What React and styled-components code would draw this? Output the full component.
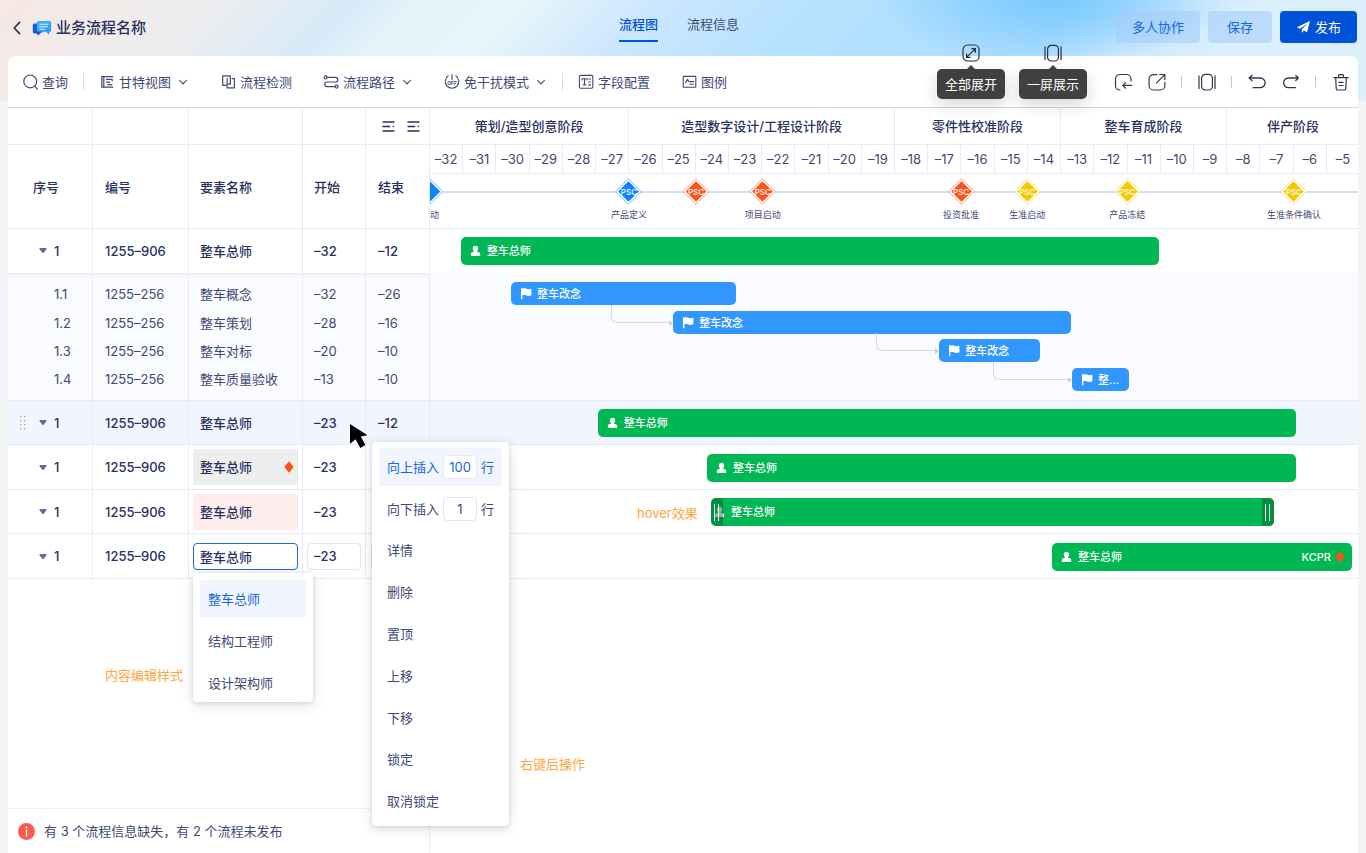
import React from "react";
import styled, { createGlobalStyle, css } from "styled-components";

const color = {
  ink: "#29325f",
  text: "#3f4975",
  blue: "#0052d9",
  line: "#e8eaf7",
  green: "#00b853",
  sky: "#3296ff",
  orange: "#ff5219",
  note: "#ffa63d",
};

const WEEKS = 28;
const FIRST_WEEK = -32;
const pct = (weeks) => `${(weeks / WEEKS) * 100}%`;
const num = (n) => String(n).replace("-", "–");

const GlobalStyle = createGlobalStyle`
  *, *::before, *::after { box-sizing: border-box; }
  body {
    margin: 0;
    background: #f2f4f6;
    color: ${color.text};
    font: 13px/20px Inter, "Noto Sans CJK SC", sans-serif;
  }
  button, input { font: inherit; color: inherit; }
  button { margin: 0; padding: 0; border: 0; background: none; cursor: pointer; }
  svg { display: block; flex: none; }
`;

const Page = styled.div`
  display: flex;
  flex-direction: column;
  min-height: 100vh;
  overflow: hidden;
  background:
    radial-gradient(ellipse 180px 64px at 77% 0, #78caff 0%, rgba(120, 202, 255, 0) 100%) 0 0 / 100% 101px no-repeat,
    linear-gradient(135deg, #f7e8e3 0%, #f1ebe9 8%, #eaedf0 16%, #d7eaf8 24%, #e4f4fa 29%, #e6f5fa 36%,
      #cce7fe 45%, #b8e2ff 55%, #b0dfff 66%, #addcff 74%, #cbe8fe 80%, #dbf0fd 87%, #dceffb 100%)
      0 0 / 100% 101px no-repeat,
    #f2f4f6;
`;

const Header = styled.header`
  display: grid;
  grid-template-columns: 1fr auto 1fr;
  height: 56px;
  padding: 0 9px 0 11px;
`;
const Brand = styled.div`
  display: flex;
  align-items: center;
  gap: 4px;
  color: ${color.ink};
  h1 { margin: 0; font-size: 15px; line-height: 24px; font-weight: 500; }
`;
const BackButton = styled.button`
  margin-right: 5px;
`;
const Tabs = styled.nav`
  display: flex;
  gap: 29px;
  margin-right: 10px;
  padding-top: 14px;
`;
const Tab = styled.a`
  height: 28px;
  color: ${(p) => (p.$active ? color.blue : color.text)};
  font-weight: ${(p) => (p.$active ? 500 : 400)};
  border-bottom: 2px solid ${(p) => (p.$active ? color.blue : "transparent")};
  text-decoration: none;
`;
const HeaderActions = styled.div`
  display: flex;
  justify-content: flex-end;
  gap: 8px;
  padding-top: 11px;
`;
const ActionButton = styled.button`
  display: flex;
  align-items: center;
  justify-content: center;
  gap: 4px;
  height: 32px;
  min-width: 64px;
  padding: 0 16px;
  border-radius: 4px;
  color: ${(p) => (p.$primary ? "#fff" : "#1565e6")};
  background: ${(p) => (p.$primary ? color.blue : "rgba(164, 202, 250, 0.55)")};
`;

const Card = styled.main`
  flex: 1;
  display: flex;
  flex-direction: column;
  margin: 0 8px;
  background: #fff;
  border-radius: 8px 8px 0 0;
`;

const Toolbar = styled.div`
  position: relative;
  display: flex;
  align-items: center;
  justify-content: space-between;
  height: 52px;
  padding: 0 7px 0 14px;
  border-bottom: 1px solid #d5d8e4;
`;
const ToolGroup = styled.div`
  display: flex;
  align-items: center;
  gap: ${(p) => p.$gap || 0}px;
`;
const ToolButton = styled.button`
  display: flex;
  align-items: center;
  gap: 4px;
`;
const ToolDivider = styled.span`
  width: 1px;
  height: 17px;
  margin: 0 15px;
  background: #d9dbe6;
`;
const IconDivider = styled.span`
  width: 2px;
  height: 12px;
  border-left: 1px solid #c3c6d0;
`;
const IconButton = styled.button`
  width: 20px;
  height: 20px;
  color: #33384d;
`;
const Hints = styled.div`
  position: absolute;
  z-index: 3;
  top: -13px;
  right: 271px;
  display: flex;
  gap: 14px;
`;
const Hint = styled.div`
  display: flex;
  flex-direction: column;
  align-items: center;
  gap: 6px;
  color: #2b2f3a;
`;
const HintBubble = styled.div`
  position: relative;
  padding: 5px 8px;
  border-radius: 5px;
  color: #fff;
  background: #404040;
  box-shadow: 0 6px 16px rgba(0, 0, 0, 0.16);
  &::before {
    content: "";
    position: absolute;
    top: -4px;
    left: 50%;
    margin-left: -5px;
    border: 5px solid transparent;
    border-top: 0;
    border-bottom-color: #404040;
  }
`;

const Workspace = styled.div`
  position: relative;
  flex: 1;
  display: flex;
`;
const ListPanel = styled.section`
  flex: none;
  display: flex;
  flex-direction: column;
  width: 422px;
  border-right: 1px solid ${color.line};
`;
const Table = styled.table`
  width: 422px;
  table-layout: fixed;
  border-collapse: separate;
  border-spacing: 0;
`;
const cell = css`
  padding: 0 0 0 12px;
  text-align: left;
  border-right: 1px solid ${color.line};
  &:nth-child(3), &:nth-child(4) { padding-left: 11px; }
`;
const Th = styled.th`
  ${cell}
  height: ${(p) => p.$height}px;
  padding-left: ${(p) => p.$pad || 12}px;
  font-weight: 500;
  color: ${color.ink};
  border-bottom: 1px solid ${color.line};
`;
const Td = styled.td`
  ${cell}
`;
const ListTools = styled.div`
  display: flex;
  gap: 12px;
  padding-left: 4px;
`;
const MainBody = styled.tbody`
  ${Td} {
    height: 44px;
    font-weight: 500;
    color: ${color.ink};
    border-bottom: 1px solid ${color.line};
  }
  tr:nth-child(even) ${Td} { height: 45px; }
  tr.active ${Td} { background: #f1f5fe; }
`;
const OpenBody = styled(MainBody)`
  ${Td} { border-bottom-color: #fff; }
`;
const SubBody = styled.tbody`
  ${Td} { height: 28px; background: #fafbfe; }
  tr:nth-child(even) ${Td} { height: 29px; }
  tr:first-child ${Td} {
    height: 35px;
    padding-top: 7px;
    background: linear-gradient(#eaedf3, #fafbfe 5px);
  }
  tr:last-child ${Td} {
    height: 36px;
    padding-bottom: 7px;
    border-bottom: 1px solid ${color.line};
  }
`;
const Index = styled.div`
  display: flex;
  align-items: center;
  padding-left: ${(p) => (p.$sub ? 34 : 0)}px;
`;
const Grip = styled.span`
  display: flex;
  width: 19px;
  visibility: ${(p) => (p.$shown ? "visible" : "hidden")};
`;
const Toggle = styled.button`
  width: 15px;
`;
const FilledCell = styled.div`
  display: flex;
  align-items: center;
  justify-content: space-between;
  height: 36px;
  margin: 0 4px 0 -7px;
  padding: 0 4px 0 7px;
  border-radius: 2px;
  background: ${(p) => p.$fill};
`;
const EditCell = styled.div`
  position: relative;
  margin: 0 4px 0 -7px;
`;
const CellInput = styled.input`
  display: block;
  width: 100%;
  height: 27px;
  padding: 0 6px;
  font-weight: 500;
  color: ${color.ink};
  background: #fff;
  border: 1px solid ${(p) => (p.$focused ? "#1f66e5" : "#e3e6f3")};
  border-radius: 4px;
  outline: 0;
`;
const popup = css`
  position: absolute;
  z-index: 2;
  background: #fff;
  border-radius: 4px;
  box-shadow: 0 3px 14px rgba(38, 47, 92, 0.14), 0 1px 4px rgba(38, 47, 92, 0.14);
`;
const Options = styled.ul`
  ${popup}
  top: 30px;
  left: 0;
  display: flex;
  flex-direction: column;
  gap: 4px;
  width: 120px;
  margin: 0;
  padding: 7px 7px 0;
  list-style: none;
  font-weight: 400;
`;
const Option = styled.button`
  display: block;
  width: 100%;
  height: 38px;
  padding-left: 8px;
  text-align: left;
  border-radius: 3px;
  color: ${(p) => (p.$active ? "#1565e6" : color.text)};
  background: ${(p) => (p.$active ? "#f1f5fe" : "transparent")};
`;
const ListFooter = styled.footer`
  display: flex;
  align-items: center;
  gap: 9px;
  height: 45px;
  margin-top: auto;
  padding-left: 10px;
  border-top: 1px solid #f0f1fa;
`;
const InfoDot = styled.span`
  display: grid;
  place-items: center;
  width: 17px;
  height: 17px;
  border-radius: 50%;
  color: #fff;
  background: #fa5a50;
`;

const Timeline = styled.section`
  flex: 1;
  min-width: 0;
  overflow: hidden;
`;
const Scale = styled.div`
  width: calc(100% + 2px);
`;
const Phases = styled.div`
  display: grid;
  grid-template-columns: 6fr 8fr 5fr 5fr 4fr;
  height: 37px;
  border-bottom: 1px solid ${color.line};
`;
const Phase = styled.div`
  display: grid;
  place-items: center;
  min-width: 0;
  font-weight: 500;
  color: ${color.ink};
  white-space: nowrap;
  border-right: 1px solid ${color.line};
`;
const Weeks = styled.div`
  display: grid;
  grid-template-columns: repeat(${WEEKS}, 1fr);
  height: 29px;
  border-bottom: 1px solid ${color.line};
`;
const Week = styled.div`
  display: grid;
  place-items: center;
  min-width: 0;
  border-right: 1px solid ${color.line};
`;
const Milestones = styled.div`
  position: relative;
  height: 55px;
  border-bottom: 1px solid ${color.line};
  &::before {
    content: "";
    position: absolute;
    top: 17px;
    left: 0;
    right: 0;
    height: 2px;
    background: #d3def8;
  }
`;
const Milestone = styled.div`
  position: absolute;
  top: 4px;
  display: flex;
  flex-direction: column;
  align-items: center;
  gap: 3px;
  transform: translateX(-50%);
  font-size: 9px;
  line-height: 14px;
  white-space: nowrap;
`;
const Gate = styled.div`
  display: grid;
  place-items: center;
  svg, span { grid-area: 1 / 1; }
  span {
    font-size: 8px;
    font-weight: 500;
    line-height: 8px;
    color: #fff;
  }
`;

const lane = css`
  position: relative;
  width: calc(100% + 2px);
`;
const Lane = styled.div`
  ${lane}
  height: 44px;
  padding-top: 8px;
  border-bottom: 1px solid ${(p) => (p.$open ? "#fff" : color.line)};
  background: ${(p) => (p.$active ? "#f1f5fe" : "#fff")};
`;
const Lanes = styled.div`
  ${Lane}:nth-child(even) { height: 45px; padding-top: 9px; }
`;
const SubLane = styled.div`
  ${lane}
  height: 28px;
  padding-top: 2px;
`;
const SubLanes = styled.div`
  height: 128px;
  padding-top: 7px;
  background: #fafbfe;
  border-bottom: 1px solid ${color.line};
  ${SubLane}:nth-child(even) { height: 29px; padding-top: 3px; }
`;
const Bar = styled.div`
  position: relative;
  display: flex;
  align-items: center;
  gap: ${(p) => (p.$sub ? 5 : 6)}px;
  height: ${(p) => (p.$sub ? 23 : 28)}px;
  padding: 0 7px 0 ${(p) => (p.$hover ? 3 : 9)}px;
  overflow: hidden;
  border-radius: 5px;
  font-size: 11px;
  line-height: 16px;
  font-weight: 500;
  color: #fff;
  background: ${(p) => (p.$sub ? color.sky : color.green)};
`;
const BarName = styled.span`
  overflow: hidden;
  text-overflow: ellipsis;
  white-space: nowrap;
`;
const BarTag = styled.span`
  display: flex;
  align-items: center;
  gap: 4px;
  margin-left: auto;
`;
const ResizeHandle = styled.span`
  position: absolute;
  top: 0;
  bottom: 0;
  ${(p) => p.$side}: 0;
  display: flex;
  align-items: center;
  justify-content: center;
  gap: 3px;
  width: 12px;
  background: rgba(10, 90, 45, 0.45);
  &::before, &::after {
    content: "";
    width: 1px;
    height: 17px;
    background: #d6f3e2;
  }
`;
const Link = styled.span`
  position: absolute;
  top: 25px;
  height: 18px;
  border: solid #d8dade;
  border-width: 0 0 1px 1px;
  border-bottom-left-radius: 6px;
  &::after {
    content: "";
    position: absolute;
    right: -1px;
    bottom: -4px;
    border: 3px solid transparent;
    border-left: 4px solid #cdd0d6;
    border-right: 0;
  }
`;

const ContextMenu = styled.div`
  ${popup}
  top: 334px;
  left: 364px;
  display: grid;
  grid-auto-rows: 1fr;
  gap: 4px;
  width: 137px;
  height: 384px;
  padding: 6px 7px;
`;
const MenuRow = styled.div`
  display: flex;
  align-items: center;
  gap: 4px;
  min-height: 0;
  padding-left: 8px;
  white-space: nowrap;
  border-radius: 3px;
  color: ${(p) => (p.$active ? "#1565e6" : color.text)};
  background: ${(p) => (p.$active ? "#f1f5fe" : "transparent")};
`;
const MenuItem = styled(MenuRow).attrs({ as: "button" })``;
const CountInput = styled.input`
  flex: none;
  width: 34px;
  height: 24px;
  margin: 0;
  padding: 0;
  text-align: center;
  background: #fff;
  border: 1px solid #e5e8f4;
  border-radius: 4px;
  outline: 0;
`;
const Note = styled.span`
  position: absolute;
  z-index: 1;
  top: ${(p) => p.$top}px;
  left: ${(p) => p.$left}px;
  color: ${color.note};
  white-space: nowrap;
`;
const Pointer = styled.svg`
  position: absolute;
  z-index: 3;
  top: 315px;
  left: 341px;
`;
const ChevronBox = styled.svg`
  margin-left: 2px;
`;

/* ---------- icons ---------- */

const Line = ({ size = 16, width = 1.1, children }) => (
  <svg width={size} height={size} viewBox={`0 0 ${size} ${size}`} fill="none" stroke="currentColor"
    strokeWidth={width} strokeLinecap="round" strokeLinejoin="round" aria-hidden="true">
    {children}
  </svg>
);
const SearchIcon = () => (
  <Line width={1.2}><circle cx="8.2" cy="7.4" r="6.4" /><path d="M12.9 12.4l2.6 2.7" /></Line>
);
const GanttIcon = () => (
  <Line width={1.2}><path d="M13.8 2.6H2.8v10.6h11M4.8 2.6v10.6M7.6 5.4h5.6v1.4M7.6 8.2h3.2M8.8 10.6h4.2" /></Line>
);
const DetectIcon = () => (
  <Line width={1.2}><path d="M5.6 11.4H2.7V1.9h7.6v8.3H8M7.2 8.1V4.4M12 4.6h2.4v9.3H7V8.2" /></Line>
);
const RouteIcon = () => (
  <Line width={1.2}>
    <circle cx="2.6" cy="3.4" r="1.5" /><circle cx="13.6" cy="12.6" r="1.5" />
    <path d="M4.2 3.4h8.2a2.3 2.3 0 0 1 0 4.6H4a2.3 2.3 0 0 0 0 4.6h8" />
  </Line>
);
const QuietIcon = () => (
  <Line>
    <path d="M4.2 1.8a6.8 6.8 0 1 0 7.6 0M8 .6v5" />
    <text x="8" y="10.6" fontSize="5" fontWeight="700" textAnchor="middle" fill="currentColor" stroke="none">OFF</text>
  </Line>
);
const FieldIcon = () => (
  <Line>
    <rect x="1.4" y="1.4" width="13.4" height="12.8" rx="1.2" />
    <path d="M4 6V4.7h5V6M6.5 4.7v6.2M5.3 10.9h2.4M10.7 5h1.8M10.7 8h1.8M10.7 10.9h1.8" />
  </Line>
);
const LegendIcon = () => (
  <Line>
    <rect x="2.2" y="2.4" width="12.6" height="10.8" rx="0.4" />
    <path d="M4.6 8.6l1.9-3.2L8.2 7.6h4.4M8.8 10.2h3.8" />
  </Line>
);
const Chevron = () => (
  <ChevronBox width="12" height="16" viewBox="0 0 12 16" fill="none" stroke="currentColor" strokeWidth="1.1"
    strokeLinecap="round" strokeLinejoin="round" aria-hidden="true">
    <path d="M2.6 6.4L6 9.8l3.4-3.4" />
  </ChevronBox>
);
const ImportIcon = () => (
  <Line size={20} width={1.2}>
    <path d="M7 18h-.3A4.2 4.2 0 0 1 2.5 13.8V7A4.5 4.5 0 0 1 7 2.5h6.5A4.5 4.5 0 0 1 18 7v2" />
    <path d="M18.7 13.4H9.8M12.6 10.6l-2.9 2.8 2.9 2.8" />
  </Line>
);
const ExportIcon = () => (
  <Line size={20} width={1.2}>
    <path d="M10 2.6H6.6A4.5 4.5 0 0 0 2.1 7.1v6.4A4.5 4.5 0 0 0 6.6 18h6.8a4.5 4.5 0 0 0 4.5-4.5V10.3" />
    <path d="M9.6 10.8l8.2-8.2M12.7 2.5h5.2v5.2" />
  </Line>
);
const FitIcon = () => (
  <Line size={20} width={1.2}>
    <rect x="4.6" y="2.4" width="10.8" height="15.6" rx="3.8" />
    <path d="M2 3.8v12.8M18 3.8v12.8" />
  </Line>
);
const UndoIcon = () => (
  <Line size={20} width={1.3}><path d="M2.3 6h11a4.85 4.85 0 0 1 0 9.7H6M5 3.2L2.2 6 5 8.8" /></Line>
);
const RedoIcon = () => (
  <Line size={20} width={1.3}><path d="M17.3 6H7.4a4.85 4.85 0 0 0 0 9.7h7M14.8 3.5L17.4 6l-2.6 2.5" /></Line>
);
const TrashIcon = () => (
  <Line size={20} width={1.2}>
    <path d="M2.8 5.7h14.4M7.4 5.7l.5-3h4.2l.5 3M4.7 5.7l.5 10.7a1.6 1.6 0 0 0 1.6 1.6h6.4a1.6 1.6 0 0 0 1.6-1.6l.5-10.7M7.9 10.3h4.3M7.9 13.5h4.3" />
  </Line>
);
const ExpandIcon = () => (
  <Line size={20} width={1.2}>
    <rect x="2" y="2" width="16" height="16" rx="4.6" />
    <path d="M5.8 14.2l8.4-8.4M10.8 5.6h3.6v3.6M5.6 10.8v3.6h3.6" />
  </Line>
);
const ListIcon = () => (
  <Line size={13} width={1.4}><path d="M1 2h11M1 6.5h6.6M11.2 6.5h.3M1 11h11" /></Line>
);
const BrandIcon = () => (
  <svg width="20" height="18" viewBox="0 0 20 18" aria-hidden="true">
    <defs>
      <linearGradient id="bubble" x1="0" y1="0" x2="0.3" y2="1">
        <stop offset="0" stopColor="#45b4f6" /><stop offset="1" stopColor="#2b9bee" />
      </linearGradient>
    </defs>
    <path d="M2.5 4.5h8v9H9l-2.6 3.1-1.9-2.2H2.500a1.700 1.700 0 0 1-1.700-1.700v-6.500a1.700 1.700 0 0 1 1.700-1.700z" fill="#1658de" />
    <path d="M6.4 2h11.200a1.600 1.600 0 0 1 1.600 1.600v7.600a1.600 1.600 0 0 1-1.600 1.600h-.4v3l-3.200-3H6.400a1.600 1.600 0 0 1-1.600-1.600V3.600A1.600 1.600 0 0 1 6.400 2z" fill="url(#bubble)" />
    <path d="M8 5.3h8M7.500 7.800h8M8 10.300h4.500" stroke="#d9f1ff" strokeWidth="1.1" strokeLinecap="round" />
  </svg>
);
const BackIcon = () => (
  <svg width="12" height="16" viewBox="0 0 12 16" fill="none" stroke={color.ink} strokeWidth="1.7" strokeLinecap="round" strokeLinejoin="round" aria-hidden="true">
    <path d="M8.6 2.4L3.200 8l5.400 5.600" />
  </svg>
);
const SendIcon = () => (
  <svg width="15" height="14" viewBox="0 0 15 14" fill="#fff" aria-hidden="true">
    <path d="M14 1L.8 7.200l3.400 1.600L11.400 3.600 5.800 9.500v3.400l2-2.300 3.300 1.600z" />
  </svg>
);
const PersonIcon = () => (
  <svg width="11" height="12" viewBox="0 0 11 12" fill="#fff" aria-hidden="true">
    <path d="M5.500.8a2.700 2.700 0 0 1 2.700 2.800c0 1.100-.5 2.100-1.200 2.600v.5l2 .6c.8.300 1.200.9 1.200 1.700v1.400c0 .4-.3.700-.7.700H1.500c-.4 0-.7-.3-.7-.7V9c0-.8.4-1.400 1.200-1.700l2-.6v-.5c-.7-.5-1.200-1.500-1.200-2.600A2.700 2.700 0 0 1 5.500.8z" />
  </svg>
);
const FlagIcon = () => (
  <svg width="12" height="13" viewBox="0 0 12 13" fill="#fff" aria-hidden="true">
    <path d="M1 1.200h1.200v.4c1.300-.6 2.600-.5 3.800 0 1.400.6 2.600.7 4 .3.700-.2 1.400 0 1.400.6v5.400c0 .4-.2.600-.6.700-1.500.5-3.200.4-4.700-.1-1.300-.5-2.600-.6-3.700-.2v3.900H1z" />
  </svg>
);
const Gem = () => (
  <svg width="10" height="12" viewBox="0 0 10 12" fill={color.orange} aria-hidden="true"><path d="M5 .2l4.700 5.800L5 11.800.3 6z" /></svg>
);
const CaretIcon = () => (
  <svg width="8" height="7" viewBox="0 0 8 7" fill="#5f6b9c" aria-hidden="true">
    <path d="M1.200 1h5.600c.7 0 1 .7.600 1.200L4.700 5.700a.9.9 0 0 1-1.400 0L.6 2.200C.2 1.700.5 1 1.200 1z" />
  </svg>
);
const GripIcon = () => (
  <svg width="7" height="14" viewBox="0 0 7 14" fill="#9ba2bd" aria-hidden="true">
    {[1, 5, 9, 13].map((y) => [0, 4].map((x) => <rect key={`${x}-${y}`} x={x} y={y - 1} width="1.3" height="1.3" />))}
  </svg>
);

/* ---------- data ---------- */

const subTasks = [
  { no: "1.1", code: "1255–256", name: "整车概念", start: -32, end: -26, bar: [2.44, 6.78], label: "整车改念", link: [5.45, 1.85] },
  { no: "1.2", code: "1255–256", name: "整车策划", start: -28, end: -16, bar: [7.32, 11.98], label: "整车改念", link: [13.44, 1.85] },
  { no: "1.3", code: "1255–256", name: "整车对标", start: -20, end: -10, bar: [15.33, 3.03], label: "整车改念", link: [16.94, 2.35] },
  { no: "1.4", code: "1255–256", name: "整车质量验收", start: -13, end: -10, bar: [19.33, 1.72], label: "整车改念" },
];
const tasks = [
  { id: "a", start: -23, end: -12, active: true, bar: [5.05, 21.02] },
  { id: "b", start: -23, end: -12, state: "marked", bar: [8.34, 17.73] },
  { id: "c", start: -23, end: -12, state: "error", bar: [8.46, 16.95], hover: true },
  { id: "d", start: -23, end: -12, state: "editing", bar: [18.73, 9.03], tag: "KCPR" },
];
const phases = ["策划/造型创意阶段", "造型数字设计/工程设计阶段", "零件性校准阶段", "整车育成阶段", "伴产阶段"];
const milestones = [
  { at: 0, tone: "#0a84ff", label: "启动" },
  { at: 5.99, tone: "#0a84ff", label: "产品定义", gate: "PSC" },
  { at: 8.01, tone: color.orange, gate: "PSC" },
  { at: 10.02, tone: color.orange, label: "项目启动", gate: "PSC" },
  { at: 15.99, tone: color.orange, label: "投资批准", gate: "PSC" },
  { at: 17.98, tone: "#f5c800", label: "生准启动", gate: "PSC" },
  { at: 20.99, tone: "#f5c800", label: "产品冻结", gate: "PSC" },
  { at: 26.01, tone: "#f5c800", label: "生准条件确认", gate: "PSC" },
];
const menuItems = ["详情", "删除", "置顶", "上移", "下移", "锁定", "取消锁定"];

/* ---------- parts ---------- */

function NameCell({ state }) {
  const name = "整车总师";
  if (state === "marked") return <FilledCell $fill="#eeeeee">{name}<Gem /></FilledCell>;
  if (state === "error") return <FilledCell $fill="#ffecec">{name}</FilledCell>;
  if (state === "editing")
    return (
      <EditCell>
        <CellInput $focused aria-label="要素名称" defaultValue={name} />
        <Options>
          <li><Option $active>整车总师</Option></li>
          <li><Option>结构工程师</Option></li>
          <li><Option>设计架构师</Option></li>
        </Options>
      </EditCell>
    );
  return name;
}

function NumberCell({ value, editing, label }) {
  if (!editing) return num(value);
  return <EditCell><CellInput aria-label={label} defaultValue={num(value)} /></EditCell>;
}

function MainRow({ task }) {
  const editing = task.state === "editing";
  return (
    <tr className={task.active ? "active" : undefined}>
      <Td>
        <Index>
          <Grip $shown={task.active}><GripIcon /></Grip>
          <Toggle aria-label="折叠"><CaretIcon /></Toggle>1
        </Index>
      </Td>
      <Td>1255–906</Td>
      <Td><NameCell state={task.state} /></Td>
      <Td><NumberCell value={task.start} editing={editing} label="开始" /></Td>
      <Td><NumberCell value={task.end} editing={editing} label="结束" /></Td>
    </tr>
  );
}

function MainBar({ task }) {
  const [from, span] = task.bar;
  return (
    <Bar $hover={task.hover} style={{ marginLeft: pct(from), width: pct(span) }}>
      {task.hover && <><ResizeHandle $side="left" /><ResizeHandle $side="right" /></>}
      <PersonIcon />
      <BarName>整车总师</BarName>
      {task.tag && <BarTag>{task.tag}<Gem /></BarTag>}
    </Bar>
  );
}

export default function App() {
  return (
    <Page>
      <GlobalStyle />
      <Header>
        <Brand>
          <BackButton aria-label="返回"><BackIcon /></BackButton>
          <BrandIcon />
          <h1>业务流程名称</h1>
        </Brand>
        <Tabs>
          <Tab href="#chart" $active>流程图</Tab>
          <Tab href="#info">流程信息</Tab>
        </Tabs>
        <HeaderActions>
          <ActionButton>多人协作</ActionButton>
          <ActionButton>保存</ActionButton>
          <ActionButton $primary><SendIcon />发布</ActionButton>
        </HeaderActions>
      </Header>

      <Card>
        <Toolbar>
          <ToolGroup>
            <ToolButton><SearchIcon />查询</ToolButton>
            <ToolDivider />
            <ToolGroup $gap={31}>
              <ToolButton><GanttIcon />甘特视图<Chevron /></ToolButton>
              <ToolButton><DetectIcon />流程检测</ToolButton>
              <ToolButton><RouteIcon />流程路径<Chevron /></ToolButton>
              <ToolButton><QuietIcon />免干扰模式<Chevron /></ToolButton>
            </ToolGroup>
            <ToolDivider />
            <ToolGroup $gap={31}>
              <ToolButton><FieldIcon />字段配置</ToolButton>
              <ToolButton><LegendIcon />图例</ToolButton>
            </ToolGroup>
          </ToolGroup>
          <ToolGroup $gap={14}>
            <IconButton aria-label="导入"><ImportIcon /></IconButton>
            <IconButton aria-label="导出"><ExportIcon /></IconButton>
            <IconDivider />
            <IconButton aria-label="一屏展示"><FitIcon /></IconButton>
            <IconDivider />
            <IconButton aria-label="撤销"><UndoIcon /></IconButton>
            <IconButton aria-label="重做"><RedoIcon /></IconButton>
            <IconDivider />
            <IconButton aria-label="删除"><TrashIcon /></IconButton>
          </ToolGroup>
          <Hints>
            <Hint><ExpandIcon /><HintBubble role="tooltip">全部展开</HintBubble></Hint>
            <Hint><FitIcon /><HintBubble role="tooltip">一屏展示</HintBubble></Hint>
          </Hints>
        </Toolbar>

        <Workspace>
          <ListPanel>
            <Table>
              <colgroup>
                <col width="85" /><col width="96" /><col width="114" /><col width="63" /><col width="64" />
              </colgroup>
              <thead>
                <tr>
                  <Th $height={37} /><Th /><Th /><Th />
                  <Th><ListTools><ListIcon /><ListIcon /></ListTools></Th>
                </tr>
                <tr>
                  <Th $height={84} $pad={25}>序号</Th>
                  <Th>编号</Th><Th>要素名称</Th><Th>开始</Th><Th>结束</Th>
                </tr>
              </thead>
              <OpenBody><MainRow task={{ start: -32, end: -12 }} /></OpenBody>
              <SubBody>
                {subTasks.map((t) => (
                  <tr key={t.no}>
                    <Td><Index $sub>{t.no}</Index></Td>
                    <Td>{t.code}</Td><Td>{t.name}</Td><Td>{num(t.start)}</Td><Td>{num(t.end)}</Td>
                  </tr>
                ))}
              </SubBody>
              <MainBody>{tasks.map((t) => <MainRow key={t.id} task={t} />)}</MainBody>
            </Table>
            <ListFooter>
              <InfoDot>
                <svg width="3" height="11" viewBox="0 0 3 11" fill="#fff" aria-hidden="true">
                  <circle cx="1.5" cy="1.5" r="1" /><rect x="0.8" y="3.6" width="1.4" height="6.8" rx="0.5" />
                </svg>
              </InfoDot>
              有 3 个流程信息缺失，有 2 个流程未发布
            </ListFooter>
          </ListPanel>

          <Timeline>
            <Scale>
              <Phases>{phases.map((p) => <Phase key={p}>{p}</Phase>)}</Phases>
              <Weeks>
                {Array.from({ length: WEEKS }, (_, i) => <Week key={i}>{num(FIRST_WEEK + i)}</Week>)}
              </Weeks>
              <Milestones>
                {milestones.map((m) => (
                  <Milestone key={m.at} style={{ left: pct(m.at) }}>
                    <Gate>
                      <svg width="27" height="27" viewBox="0 0 27 27" aria-hidden="true">
                        <path d="M13.5.8L26.2 13.5 13.5 26.2.8 13.5z" fill="#fff" stroke={m.tone} strokeOpacity="0.55" />
                        <path d="M13.5 3.2L23.8 13.5 13.5 23.8 3.2 13.5z" fill={m.tone} />
                      </svg>
                      {m.gate && <span>{m.gate}</span>}
                    </Gate>
                    {m.label}
                  </Milestone>
                ))}
              </Milestones>
            </Scale>
            <Lane $open><MainBar task={{ bar: [0.93, 21.02] }} /></Lane>
            <SubLanes>
              {subTasks.map((t) => (
                <SubLane key={t.no}>
                  <Bar $sub style={{ marginLeft: pct(t.bar[0]), width: pct(t.bar[1]) }}>
                    <FlagIcon /><BarName>{t.label}</BarName>
                  </Bar>
                  {t.link && <Link style={{ left: pct(t.link[0]), width: pct(t.link[1]) }} />}
                </SubLane>
              ))}
            </SubLanes>
            <Lanes>
              {tasks.map((t) => (
                <Lane key={t.id} $active={t.active}><MainBar task={t} /></Lane>
              ))}
            </Lanes>
          </Timeline>

          <ContextMenu>
            <MenuRow $active as="label">向上插入<CountInput defaultValue="100" />行</MenuRow>
            <MenuRow as="label">向下插入<CountInput defaultValue="1" />行</MenuRow>
            {menuItems.map((m) => <MenuItem key={m}>{m}</MenuItem>)}
          </ContextMenu>
          <Pointer width="22" height="28" viewBox="0 0 22 28" aria-hidden="true">
            <path d="M1 1l17.5 11.2-6.7 1.3 4.6 8.6-5.2 2.8-4.6-8.7L1 20.8z" />
          </Pointer>
          <Note $top={557} $left={97}>内容编辑样式</Note>
          <Note $top={395} $left={629}>hover效果</Note>
          <Note $top={646} $left={512}>右键后操作</Note>
        </Workspace>
      </Card>
    </Page>
  );
}
